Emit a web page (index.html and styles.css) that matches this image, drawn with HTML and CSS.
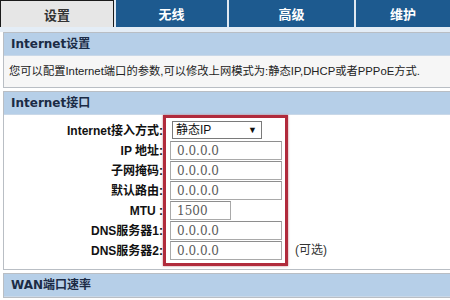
FILE: index.html
```html
<!DOCTYPE html>
<html lang="zh-CN">
<head>
<meta charset="utf-8">
<title>Internet设置</title>
<link rel="stylesheet" href="styles.css">
</head>
<body>
<nav class="tabs">
  <div class="tab tab-active">设置</div>
  <div class="tab tab-w2">无线</div>
  <div class="tab tab-w3">高级</div>
  <div class="tab tab-w4">维护</div>
</nav>
<div class="strip"></div>
<section class="panel">
  <h2 class="panel-head">Internet设置</h2>
  <div class="panel-desc">您可以配置Internet端口的参数,可以修改上网模式为:静态IP,DHCP或者PPPoE方式.</div>
</section>
<section class="panel">
  <h2 class="panel-head">Internet接口</h2>
  <div class="form">
    <div class="labels">
      <div class="row">Internet接入方式:</div>
      <div class="row">IP 地址:</div>
      <div class="row">子网掩码:</div>
      <div class="row">默认路由:</div>
      <div class="row">MTU :</div>
      <div class="row">DNS服务器1:</div>
      <div class="row">DNS服务器2:</div>
    </div>
    <div class="redbox">
      <div class="row"><div class="select"><span>静态IP</span><span class="arrow">▼</span></div></div>
      <div class="row"><div class="input">0.0.0.0</div></div>
      <div class="row"><div class="input">0.0.0.0</div></div>
      <div class="row"><div class="input">0.0.0.0</div></div>
      <div class="row"><div class="input input-short">1500</div></div>
      <div class="row"><div class="input">0.0.0.0</div></div>
      <div class="row"><div class="input">0.0.0.0</div></div>
    </div>
    <div class="extra">
      <div class="row optional">(可选)</div>
    </div>
  </div>
</section>
<section class="panel">
  <h2 class="panel-head">WAN端口速率</h2>
</section>
</body>
</html>
```

FILE: styles.css
```css
html, body {
  margin: 0;
  padding: 0;
  background: #ffffff;
  font-family: "Liberation Sans", "Noto Sans CJK SC", sans-serif;
  font-size: 12px;
  color: #222;
  overflow: hidden;
}

.tabs {
  display: flex;
  height: 27px;
  gap: 2px;
  background: #dfe8f1;
}
.tab {
  display: flex;
  align-items: center;
  justify-content: center;
  background: #1d5a8f;
  color: #ffffff;
  font-weight: bold;
  font-size: 13px;
}
.tab-active {
  width: 112px;
  background: #e6e6e6;
  color: #333;
  border: 1px solid #1a1a1a;
  border-bottom: none;
}
.tab-w2 { width: 111px; }
.tab-w3 { width: 125px; }
.tab-w4 { flex: 1; }

.strip {
  height: 5px;
  background: #e4edf6;
}

.panel {
  margin: 0 0 3px 3px;
  border: 1px solid #b9bec4;
  border-right: none;
  background: #ffffff;
}
.panel-head {
  margin: 0;
  height: 22px;
  line-height: 22px;
  padding-left: 7px;
  background: #b6cfe8;
  color: #1b2b45;
  font-family: "DejaVu Sans", "Noto Sans CJK SC", sans-serif;
  font-size: 12px;
  font-weight: bold;
  border-bottom: 1px solid #c9d8e8;
}
.panel-desc {
  height: 31px;
  line-height: 31px;
  padding-left: 5px;
  background: #f6f6f6;
  color: #222;
  font-size: 11.3px;
}

.form {
  display: flex;
  align-items: flex-start;
  padding-bottom: 3px;
}
.labels {
  width: 159px;
  padding-top: 6px;
  text-align: right;
  font-weight: bold;
  color: #111;
}
.row {
  height: 20px;
  line-height: 20px;
  display: flex;
  align-items: center;
}
.labels .row { justify-content: flex-end; }
.redbox {
  width: 113px;
  padding: 2px 2px 3px 4px;
  border: 3px solid #b12b3c;
  box-shadow: 0 0 2px rgba(150, 40, 50, 0.6);
}
.select {
  margin-left: 2px;
  border: 1px solid #7a7a7a;
  background: #ffffff;
  display: flex;
  align-items: center;
  justify-content: space-between;
  padding: 0 4px 0 3px;
  box-sizing: border-box;
  width: 90px;
  height: 18px;
  color: #111;
}
.arrow { font-size: 9px; }
.input {
  width: 112px;
  height: 19px;
  line-height: 19px;
  box-sizing: border-box;
  border: 1px solid #a9a9a9;
  border-top-color: #8e8e8e;
  background: #ffffff;
  padding-left: 6px;
  color: #5a5a5a;
  font-family: "DejaVu Serif", serif;
  font-size: 12px;
}
.input-short { width: 61px; }
.extra {
  padding-top: 125px;
  padding-left: 7px;
  color: #333;
}
```
